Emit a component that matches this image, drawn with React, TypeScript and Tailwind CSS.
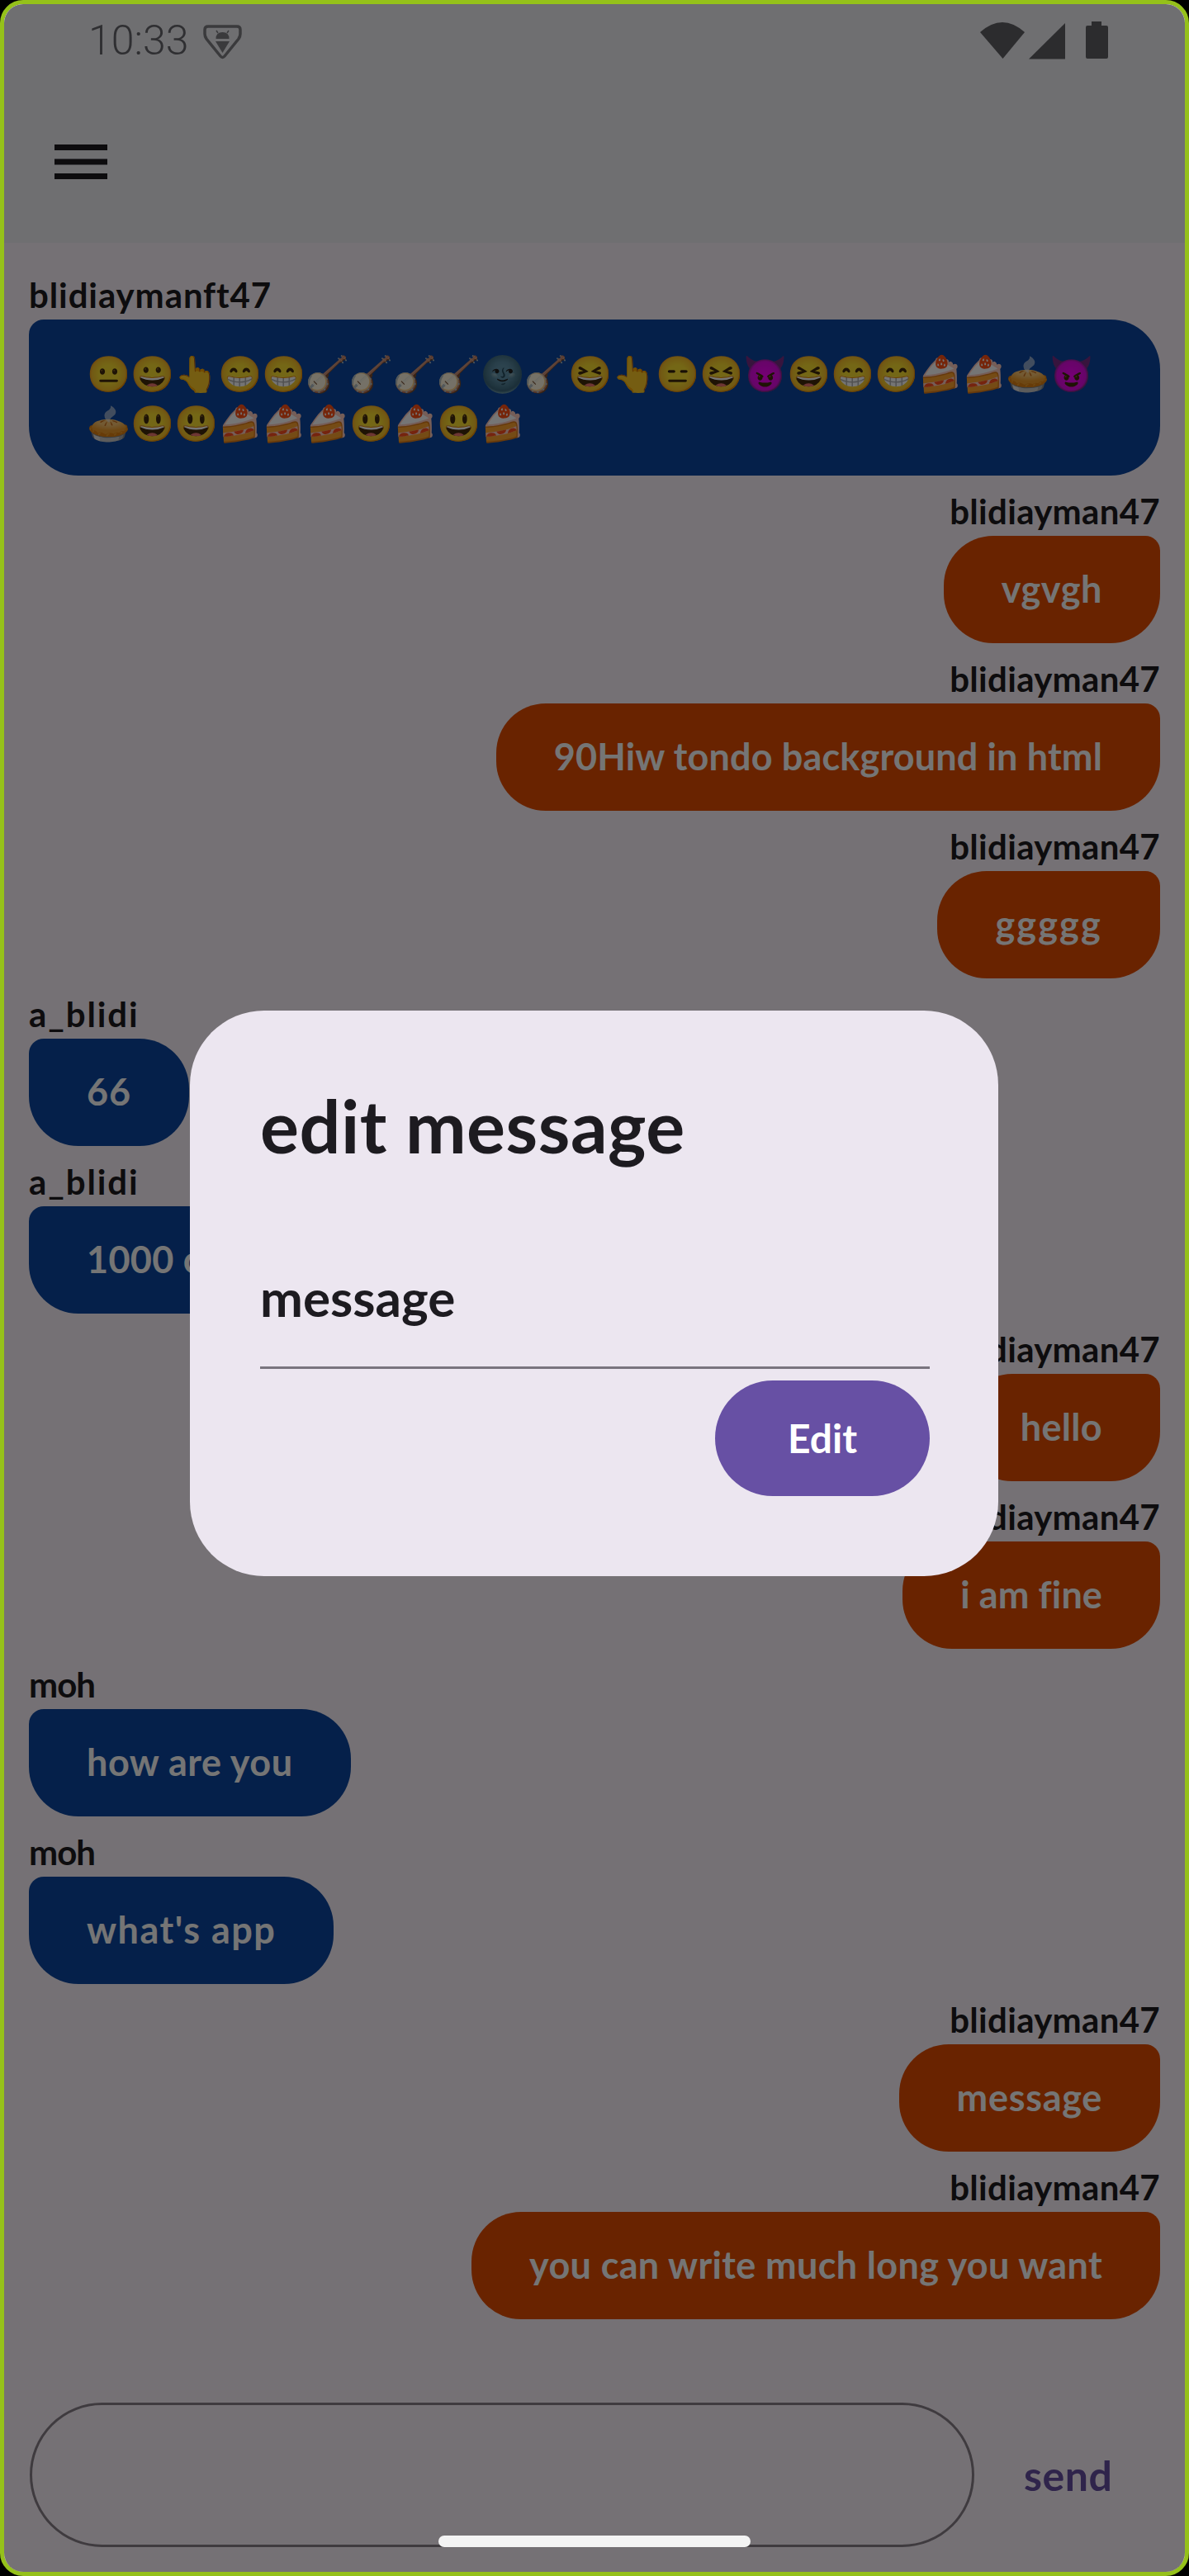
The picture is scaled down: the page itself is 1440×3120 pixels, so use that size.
import React from "react";

const ROW_ONE = "😐😀👆😁😁🪕🪕🪕🪕🌚🪕😆👆😑😆😈😆😁😁🍰🍰🥧😈";
const ROW_TWO = "🥧😃😃🍰🍰🍰😃🍰😃🍰";

interface Message {
  who: string;
  whoTracking: string;
  text: string;
  textTracking: string;
  mine: boolean;
}

const messages: Message[] = [
  { who: "blidiayman47", whoTracking: "tracking-[0.3px]", text: "vgvgh", textTracking: "tracking-[0.6px]", mine: true },
  { who: "blidiayman47", whoTracking: "tracking-[0.3px]", text: "90Hiw tondo background in html", textTracking: "tracking-[0.15px]", mine: true },
  { who: "blidiayman47", whoTracking: "tracking-[0.3px]", text: "ggggg", textTracking: "tracking-[2.2px]", mine: true },
  { who: "a_blidi", whoTracking: "tracking-[1.9px]", text: "66", textTracking: "tracking-[0.8px]", mine: false },
  { who: "a_blidi", whoTracking: "tracking-[1.9px]", text: "1000 cars", textTracking: "tracking-[0.3px]", mine: false },
  { who: "blidiayman47", whoTracking: "tracking-[0.3px]", text: "hello", textTracking: "tracking-[0.3px]", mine: true },
  { who: "blidiayman47", whoTracking: "tracking-[0.3px]", text: "i am fine", textTracking: "tracking-[0.1px]", mine: true },
  { who: "moh", whoTracking: "tracking-[-1px]", text: "how are you", textTracking: "tracking-[0.5px]", mine: false },
  { who: "moh", whoTracking: "tracking-[-1px]", text: "what's app", textTracking: "tracking-[1.5px]", mine: false },
  { who: "blidiayman47", whoTracking: "tracking-[0.3px]", text: "message", textTracking: "tracking-[0.7px]", mine: true },
  { who: "blidiayman47", whoTracking: "tracking-[0.3px]", text: "you can write much long you want", textTracking: "tracking-[0.35px]", mine: true },
];

function SenderName({ name, tracking }: { name: string; tracking: string }) {
  return (
    <div className={`mt-[22px] mb-[9px] text-[42px] leading-[42px] font-bold text-[#1d1b20] ${tracking}`}>
      {name}
    </div>
  );
}

function Bubble({ who, whoTracking, text, textTracking, mine }: Message) {
  return (
    <div className={`flex flex-col ${mine ? "items-end" : "items-start"}`}>
      <SenderName name={who} tracking={whoTracking} />
      <div
        className={`h-[130px] px-[70px] text-[45px] leading-[128px] font-bold text-white rounded-[60px] ${textTracking} ${
          mine ? "bg-[#e44e00] rounded-tr-[18px]" : "bg-[#0d47a1] rounded-tl-[18px]"
        }`}
      >
        {text}
      </div>
    </div>
  );
}

function ShieldIcon() {
  return (
    <svg width="47" height="42" viewBox="0 0 47 42" className="ml-[18px] mt-[4px]">
      <path
        d="M6 2 H41 Q45 2 45 6 V11 Q45 14 43 17 L26 38 Q23.5 41 21 38 L4 17 Q2 14 2 11 V6 Q2 2 6 2Z"
        fill="none"
        stroke="#7e7e83"
        strokeWidth="3.5"
      />
      <path d="M15.5 17 Q15.5 9 23.5 9 Q31.5 9 31.5 17Z" fill="#7e7e83" />
      <path d="M18 10 L16 7 M29 10 L31 7" stroke="#7e7e83" strokeWidth="1.5" />
      <path d="M15 20 H32 L23.5 34Z" fill="#7e7e83" />
    </svg>
  );
}

function StatusIcons() {
  return (
    <svg width="155" height="46" viewBox="0 0 155 46" className="ml-auto mr-[93px]" fill="#606064">
      <path d="M0 13 Q27 -11 54 13 L27.5 45Z" />
      <path d="M59 45.6 L103 2 V45.6Z" />
      <path d="M135 0 H147 V5 H153 Q155 5 155 7 V43 Q155 45 153 45 H130 Q128 45 128 43 V7 Q128 5 130 5 H135Z" />
    </svg>
  );
}

export default function App() {
  return (
    <div className="w-[1440px] h-[3120px] bg-black font-[Lato,sans-serif]">
      <div className="relative w-full h-full flex flex-col overflow-hidden border-[5px] border-[#95c11a] rounded-[28px] bg-[#fff6fe]">
        {/* app bar */}
        <header className="h-[289px] shrink-0 bg-[#f1f1f6]">
          <div className="h-[88px] pl-[102px] flex items-center">
            <span className="text-[50px] font-light font-[Roboto,sans-serif] text-[#68686d]">10:33</span>
            <ShieldIcon />
            <StatusIcons />
          </div>
          <div className="pl-[61px] pt-[82px]">
            <svg width="64" height="42" viewBox="0 0 64 42" fill="#1d1b20">
              <rect width="64" height="7" />
              <rect y="17.5" width="64" height="7" />
              <rect y="35" width="64" height="7" />
            </svg>
          </div>
        </header>

        {/* chat list */}
        <main className="flex-1 px-[30px] pt-[20px]">
          <SenderName name="blidiaymanft47" tracking="tracking-[0.9px]" />
          <div className="h-[189px] px-[70px] py-[35px] bg-[#0d47a1] text-white text-[42.67px] leading-[60px] rounded-[60px] rounded-tl-[18px]">
            <div>{ROW_ONE}</div>
            <div>{ROW_TWO}</div>
          </div>
          {messages.map((m, i) => (
            <Bubble key={i} {...m} />
          ))}
        </main>

        {/* composer */}
        <footer className="shrink-0 flex items-center pl-[31px] pb-[30px]">
          <div className="w-[1144px] h-[175px] border-[3px] border-[#89808a] rounded-[88px]" />
          <button className="ml-[60px] text-[50px] leading-none font-bold tracking-[0.5px] text-[#6750a4]">send</button>
        </footer>

        {/* scrim */}
        <div className="absolute inset-0 bg-black/[0.54]" />

        {/* gesture bar */}
        <div className="absolute left-[526px] bottom-[30px] w-[378px] h-[14px] rounded-[7px] bg-[#f4f4f4]" />

        {/* edit dialog */}
        <div className="absolute left-[225px] top-[1219px] w-[979px] h-[685px] pt-[89px] pl-[85px] pr-[83px] flex flex-col rounded-[90px] bg-[#ece6f0] text-[#1d1b20]">
          <h2 className="text-[88px] leading-[100px] font-bold tracking-[0.5px]">edit message</h2>
          <div className="mt-[118px] pb-[44px] border-b-[3px] border-[#79747e] text-[62px] leading-[80px] font-bold">
            message
          </div>
          <button className="self-end mt-[14px] w-[260px] h-[140px] rounded-[70px] bg-[#6750a4] text-white text-[48px] font-bold">
            Edit
          </button>
        </div>
      </div>
    </div>
  );
}
